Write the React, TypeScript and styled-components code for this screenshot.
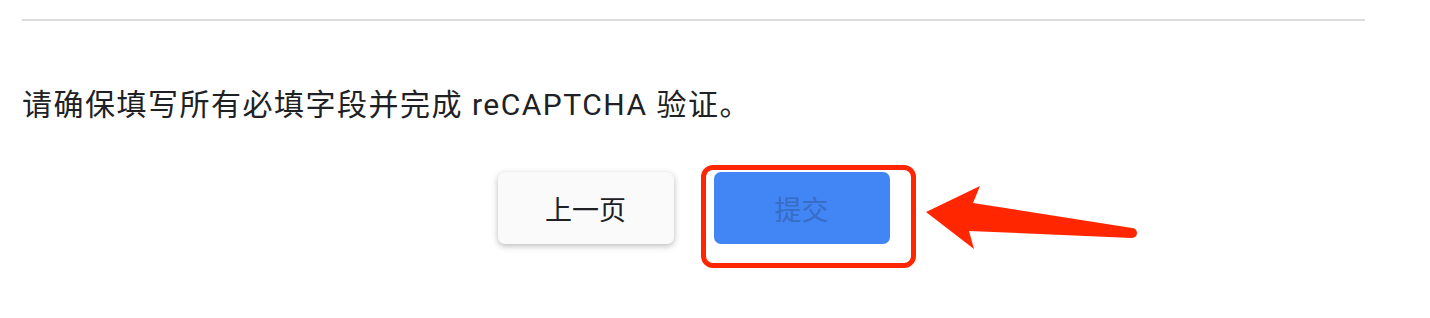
import React from 'react';
import styled, { createGlobalStyle } from 'styled-components';

const GlobalStyle = createGlobalStyle`
    body {
        margin: 0;
        background: #ffffff;
        font-family: Roboto, "Noto Sans CJK SC", sans-serif;
    }
`;

const Page = styled.div`
    box-sizing: border-box;
    width: 1343px;
    min-height: 318px;
    margin-left: 22px;
    padding-top: 19px;
`;

const Divider = styled.div`
    height: 2px;
    background: #dcdcdc;
`;

const Message = styled.p`
    margin: 64px 0 0;
    font-size: 30px;
    line-height: 40px;
    letter-spacing: 1.5px;
    color: #202124;
`;

const Actions = styled.div`
    display: flex;
    justify-content: center;
    gap: 40px;
    margin-top: 47px;
`;

interface ButtonProps {
    primary?: boolean;
}

const Button = styled.button<ButtonProps>`
    width: 176px;
    height: 72px;
    border: none;
    border-radius: 7px;
    font-family: Roboto, "Noto Sans CJK SC", sans-serif;
    font-size: 27px;
    cursor: pointer;
    background: ${({ primary }) => (primary ? '#4285f4' : '#fafafa')};
    color: ${({ primary }) => (primary ? '#376dc6' : '#202124')};
    box-shadow: ${({ primary }) => (primary ? 'none' : '0 2px 6px rgba(0, 0, 0, 0.28)')};
`;

const Highlighted = styled.div`
    position: relative;
`;

const HighlightBox = styled.div`
    position: absolute;
    top: -7px;
    left: -13px;
    right: -26px;
    bottom: -24px;
    border: 5px solid #ff2600;
    border-radius: 12px;
    pointer-events: none;
`;

const Arrow = styled.svg`
    position: absolute;
    left: 207px;
    top: 8px;
    width: 220px;
    height: 75px;
    overflow: visible;
`;

const App = () => {
    return (
        <>
            <GlobalStyle />
            <Page>
                <Divider />
                <Message>请确保填写所有必填字段并完成 reCAPTCHA 验证。</Message>
                <Actions>
                    <Button>上一页</Button>
                    <Highlighted>
                        <Button primary>提交</Button>
                        <HighlightBox />
                        <Arrow viewBox="0 0 220 75">
                            <path
                                d="M5 32 L59 6 L52 23 L211 48 A5 5 0 0 1 211 58 L48 51 L53 69 Z"
                                fill="#ff2600"
                            />
                        </Arrow>
                    </Highlighted>
                </Actions>
            </Page>
        </>
    );
};

export default App;
